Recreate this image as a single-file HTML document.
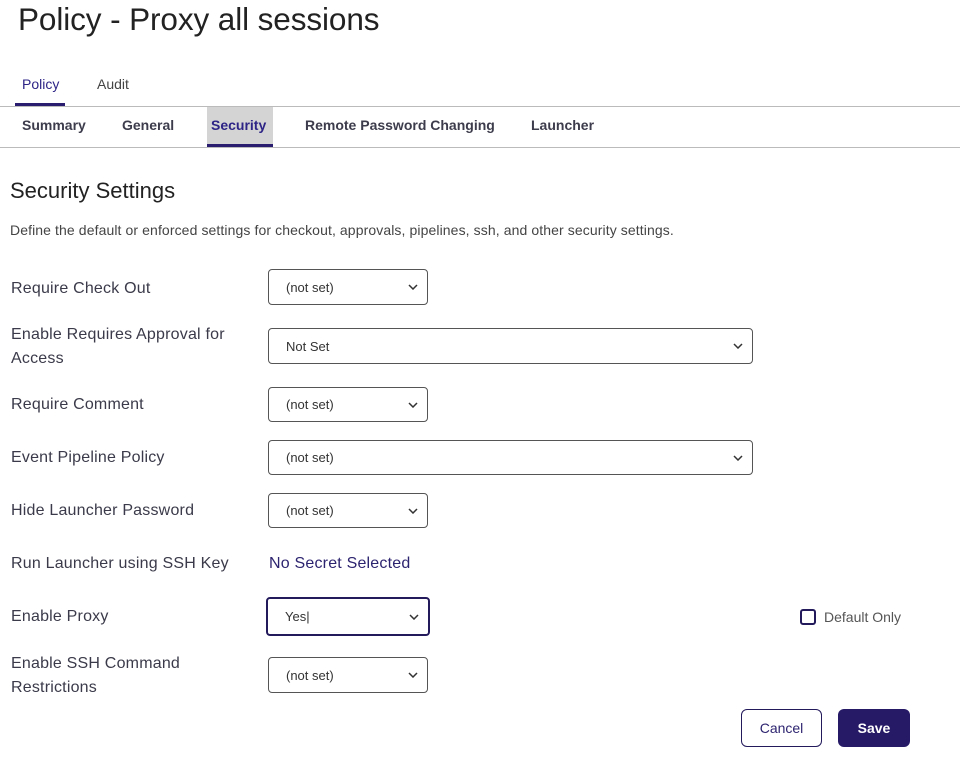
<!DOCTYPE html>
<html><head><style>
body{margin:0;width:960px;height:778px;background:#fff;font-family:"Liberation Sans",sans-serif;position:relative;overflow:hidden;color:#333}
.a{position:absolute;white-space:nowrap}
.sel{position:absolute;border:1px solid #555;border-radius:4px;box-sizing:border-box;font-size:13px;color:#333;padding-left:17px;display:flex;align-items:center}
.sel svg{position:absolute;right:9px;top:50%;margin-top:-3px}
.lbl{position:absolute;left:11px;font-size:16px;color:#3a3a4a;line-height:24px;letter-spacing:0.2px;top:2px}
.tab{position:absolute;top:117px;font-size:14px;font-weight:bold;color:#3c3c4c}
</style></head><body>
<div class="a" style="left:18px;top:1px;font-size:31.5px;color:#222;letter-spacing:-0.1px">Policy - Proxy all sessions</div>
<div class="a" style="left:22px;top:76px;font-size:14px;color:#2d2486">Policy</div>
<div class="a" style="left:97px;top:76px;font-size:14px;color:#444">Audit</div>
<div class="a" style="left:15px;top:103px;width:50px;height:3px;background:#2a1c6f"></div>
<div class="a" style="left:0;top:106px;width:960px;height:1px;background:#bbb"></div>
<div class="a" style="left:207px;top:107px;width:66px;height:40px;background:#d4d4d4"></div>
<div class="a" style="left:207px;top:144px;width:66px;height:3px;background:#2a1c6f"></div>
<div class="tab" style="left:22px">Summary</div>
<div class="tab" style="left:122px">General</div>
<div class="tab" style="left:211px;color:#2d2486">Security</div>
<div class="tab" style="left:305px">Remote Password Changing</div>
<div class="tab" style="left:531px">Launcher</div>
<div class="a" style="left:0;top:147px;width:960px;height:1px;background:#bbb"></div>
<div class="a" style="left:10px;top:178px;font-size:22px;color:#222">Security Settings</div>
<div class="a" style="left:10px;top:222px;font-size:14px;color:#444;letter-spacing:0.1px">Define the default or enforced settings for checkout, approvals, pipelines, ssh, and other security settings.</div>
<div class="lbl" style="top:277px">Require Check Out</div>
<div class="lbl" style="top:323px">Enable Requires Approval for<br>Access</div>
<div class="lbl" style="top:393px">Require Comment</div>
<div class="lbl" style="top:446px">Event Pipeline Policy</div>
<div class="lbl" style="top:499px">Hide Launcher Password</div>
<div class="lbl" style="top:552px">Run Launcher using SSH Key</div>
<div class="lbl" style="top:605px">Enable Proxy</div>
<div class="lbl" style="top:652px">Enable SSH Command<br>Restrictions</div>
<div class="sel" style="left:268px;top:269px;width:160px;height:36px">(not set)<svg width="10" height="6"><path d="M1 1L5 5L9 1" stroke="#333" stroke-width="1.5" fill="none"/></svg></div>
<div class="sel" style="left:268px;top:328px;width:485px;height:36px">Not Set<svg width="10" height="6"><path d="M1 1L5 5L9 1" stroke="#333" stroke-width="1.5" fill="none"/></svg></div>
<div class="sel" style="left:268px;top:387px;width:160px;height:35px">(not set)<svg width="10" height="6"><path d="M1 1L5 5L9 1" stroke="#333" stroke-width="1.5" fill="none"/></svg></div>
<div class="sel" style="left:268px;top:440px;width:485px;height:35px">(not set)<svg width="10" height="6"><path d="M1 1L5 5L9 1" stroke="#333" stroke-width="1.5" fill="none"/></svg></div>
<div class="sel" style="left:268px;top:493px;width:160px;height:35px">(not set)<svg width="10" height="6"><path d="M1 1L5 5L9 1" stroke="#333" stroke-width="1.5" fill="none"/></svg></div>
<div class="a" style="left:269px;top:555px;font-size:16px;color:#2d2470;letter-spacing:0.2px">No Secret Selected</div>
<div class="sel" style="left:266px;top:597px;width:164px;height:39px;border:2px solid #231a5c">Yes|<svg width="10" height="6"><path d="M1 1L5 5L9 1" stroke="#333" stroke-width="1.5" fill="none"/></svg></div>
<div class="a" style="left:800px;top:609px;width:12px;height:12px;border:2px solid #231a5c;border-radius:3px"></div>
<div class="a" style="left:824px;top:609px;font-size:14px;color:#555">Default Only</div>
<div class="sel" style="left:268px;top:657px;width:160px;height:36px">(not set)<svg width="10" height="6"><path d="M1 1L5 5L9 1" stroke="#333" stroke-width="1.5" fill="none"/></svg></div>
<div class="a" style="left:741px;top:709px;width:81px;height:38px;border:1px solid #231a5c;border-radius:6px;box-sizing:border-box;text-align:center;line-height:36px;font-size:14px;color:#2d2470">Cancel</div>
<div class="a" style="left:838px;top:709px;width:72px;height:38px;background:#261a66;border-radius:6px;text-align:center;line-height:38px;font-size:14px;font-weight:bold;color:#fff">Save</div>
</body></html>
